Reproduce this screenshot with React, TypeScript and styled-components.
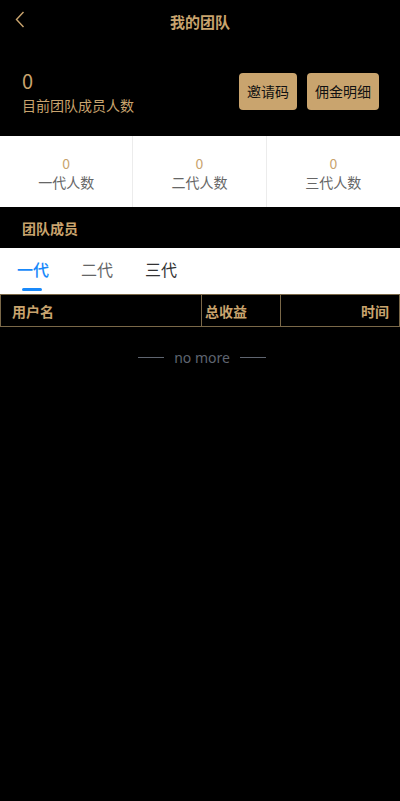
import React, { useState } from "react";
import styled, { createGlobalStyle } from "styled-components";

const GOLD = "#c9a46e";

const GlobalStyle = createGlobalStyle`
  html, body {
    margin: 0;
    padding: 0;
    background: #000;
  }
  body {
    font-family: "Noto Sans CJK SC", "Noto Sans", sans-serif;
  }
`;

const Page = styled.div`
  min-height: 801px;
  background: #000;
  display: flex;
  flex-direction: column;
`;

const NavBar = styled.div`
  position: relative;
  height: 46px;
  display: flex;
  align-items: center;
  justify-content: center;
`;

const BackButton = styled.button`
  position: absolute;
  left: 10px;
  top: 8px;
  width: 20px;
  height: 24px;
  padding: 0;
  border: none;
  background: none;
  display: flex;
  align-items: center;
  justify-content: center;
  color: ${GOLD};
`;

const NavTitle = styled.h1`
  margin: 0 0 2px;
  font-size: 15px;
  font-weight: 700;
  color: ${GOLD};
  line-height: 20px;
`;

const Summary = styled.div`
  height: 90px;
  display: flex;
  align-items: center;
  justify-content: space-between;
  padding: 0 21px 0 22px;
`;

const SummaryText = styled.div`
  display: flex;
  flex-direction: column;
  color: ${GOLD};
  margin-top: 1px;
`;

const BigCount = styled.div`
  font-size: 20px;
  line-height: 24px;
`;

const SummaryLabel = styled.div`
  font-size: 14px;
  line-height: 20px;
  margin-top: 2px;
`;

const Actions = styled.div`
  display: flex;
  gap: 10px;
`;

const GoldButton = styled.button`
  height: 37px;
  padding: 0 8px;
  border: none;
  border-radius: 4px;
  background: ${GOLD};
  color: #111;
  font-family: inherit;
  font-size: 14px;
`;

const StatsPanel = styled.div`
  background: #fff;
  display: grid;
  grid-template-columns: repeat(3, 1fr);
  height: 71px;
`;

const StatCell = styled.div<{ last?: boolean }>`
  display: flex;
  flex-direction: column;
  align-items: center;
  justify-content: center;
  border-right: ${(p) => (p.last ? "none" : "1px solid #ececec")};
  padding-top: 3px;
`;

const StatValue = styled.div`
  font-size: 14px;
  line-height: 18px;
  color: ${GOLD};
`;

const StatLabel = styled.div`
  font-size: 14px;
  line-height: 20px;
  color: #666;
`;

const SectionTitle = styled.div`
  height: 41px;
  display: flex;
  align-items: center;
  padding-left: 22px;
  font-size: 14px;
  font-weight: 700;
  color: ${GOLD};
`;

const Tabs = styled.div`
  background: #fff;
  height: 46px;
  display: flex;
  padding-left: 1px;
`;

const Tab = styled.button<{ active?: boolean; tone: string }>`
  position: relative;
  width: 64px;
  border: none;
  background: none;
  padding: 0 0 4px;
  font-family: inherit;
  font-size: 16px;
  color: ${(p) => (p.active ? "#1989fa" : p.tone)};
  font-weight: ${(p) => (p.active ? 500 : 400)};

  &::after {
    content: "";
    display: ${(p) => (p.active ? "block" : "none")};
    position: absolute;
    left: 21px;
    bottom: 3px;
    width: 20px;
    height: 3px;
    border-radius: 2px;
    background: #1989fa;
  }
`;

const TableHead = styled.div`
  display: grid;
  grid-template-columns: 200px 79px 1fr;
  height: 31px;
  border: 1px solid #7a6848;
  font-size: 14px;
  font-weight: 700;
  color: ${GOLD};
`;

const HeadCell = styled.div<{ align?: "left" | "right"; divider?: boolean }>`
  display: flex;
  align-items: center;
  justify-content: ${(p) => (p.align === "right" ? "flex-end" : "flex-start")};
  padding: ${(p) => (p.align === "right" ? "0 10px 0 0" : "0 0 0 3px")};
  border-left: ${(p) => (p.divider ? "1px solid #7a6848" : "none")};
`;

const FirstCell = styled(HeadCell)`
  padding-left: 11px;
`;

const NoMore = styled.div`
  margin-top: 21px;
  display: flex;
  align-items: center;
  justify-content: center;
  gap: 10px;
  font-family: "Noto Sans", sans-serif;
  font-size: 14px;
  color: #5f6570;
  padding-left: 4px;

  &::before,
  &::after {
    content: "";
    width: 26px;
    height: 1px;
    background: #5f6570;
  }
`;

const ChevronLeft = () => (
  <svg width="12" height="20" viewBox="0 0 12 20" fill="none">
    <polyline points="9.5,2 2.5,9.5 9.5,17" stroke={GOLD} strokeWidth="1.4" />
  </svg>
);

const tabs = [
  { label: "一代", tone: "#1989fa" },
  { label: "二代", tone: "#646566" },
  { label: "三代", tone: "#323233" },
];

export default function App() {
  const [active, setActive] = useState(0);
  const stats = ["一代人数", "二代人数", "三代人数"];

  return (
    <Page>
      <GlobalStyle />
      <NavBar>
        <BackButton aria-label="back">
          <ChevronLeft />
        </BackButton>
        <NavTitle>我的团队</NavTitle>
      </NavBar>
      <Summary>
        <SummaryText>
          <BigCount>0</BigCount>
          <SummaryLabel>目前团队成员人数</SummaryLabel>
        </SummaryText>
        <Actions>
          <GoldButton>邀请码</GoldButton>
          <GoldButton>佣金明细</GoldButton>
        </Actions>
      </Summary>
      <StatsPanel>
        {stats.map((s, i) => (
          <StatCell key={s} last={i === stats.length - 1}>
            <StatValue>0</StatValue>
            <StatLabel>{s}</StatLabel>
          </StatCell>
        ))}
      </StatsPanel>
      <SectionTitle>团队成员</SectionTitle>
      <Tabs>
        {tabs.map((t, i) => (
          <Tab
            key={t.label}
            tone={t.tone}
            active={i === active}
            onClick={() => setActive(i)}
          >
            {t.label}
          </Tab>
        ))}
      </Tabs>
      <TableHead>
        <FirstCell>用户名</FirstCell>
        <HeadCell divider>总收益</HeadCell>
        <HeadCell divider align="right">
          时间
        </HeadCell>
      </TableHead>
      <NoMore>no more</NoMore>
    </Page>
  );
}
